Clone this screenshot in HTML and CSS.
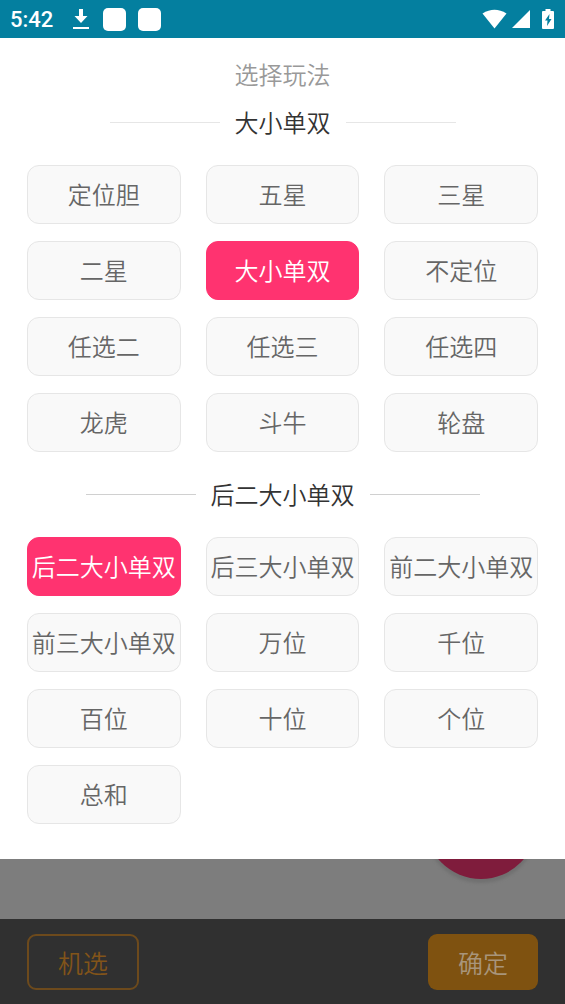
FILE: index.html
```html
<!DOCTYPE html>
<html lang="zh-CN">
<head>
<meta charset="utf-8">
<meta name="viewport" content="width=device-width, initial-scale=1">
<title>选择玩法</title>
<link rel="stylesheet" href="styles.css">
</head>
<body>
<div class="screen">
  <header class="status">
    <div class="status-group">
      <time class="clock">5:42</time>
      <svg class="download" width="16" height="22" viewBox="0 0 16 22" aria-hidden="true"><path d="M6 1h4v7h4.500L8 15 1.500 8H6zM0 19h16v2H0z"/></svg>
      <span class="app-dot"></span>
      <span class="app-dot"></span>
    </div>
    <div class="status-icons">
      <svg width="26" height="20" viewBox="0 0 26 20" aria-hidden="true"><path d="M.5 4.500Q12.500-3 24.500 4.500L12.500 19.500z"/></svg>
      <svg width="18" height="18" viewBox="0 0 18 18" aria-hidden="true"><path d="M18 0v18H0z"/></svg>
      <svg class="battery" width="12" height="20" viewBox="0 0 12 20" aria-hidden="true"><path fill-rule="evenodd" d="M3.500 0h5v2H11q1 0 1 1v16q0 1-1 1H1q-1 0-1-1V3q0-1 1-1h2.500zM7.500 5L3 11.500h2.500L5 17l4.500-7H7z"/></svg>
    </div>
  </header>

  <main class="sheet">
    <h1 class="title">选择玩法</h1>
    <section>
      <h2 class="heading">大小单双</h2>
      <div class="options">
        <button class="option" type="button">定位胆</button>
        <button class="option" type="button">五星</button>
        <button class="option" type="button">三星</button>
        <button class="option" type="button">二星</button>
        <button class="option selected" type="button" aria-pressed="true">大小单双</button>
        <button class="option" type="button">不定位</button>
        <button class="option" type="button">任选二</button>
        <button class="option" type="button">任选三</button>
        <button class="option" type="button">任选四</button>
        <button class="option" type="button">龙虎</button>
        <button class="option" type="button">斗牛</button>
        <button class="option" type="button">轮盘</button>
      </div>
    </section>
    <section>
      <h2 class="heading strong-rule">后二大小单双</h2>
      <div class="options">
        <button class="option selected" type="button" aria-pressed="true">后二大小单双</button>
        <button class="option" type="button">后三大小单双</button>
        <button class="option" type="button">前二大小单双</button>
        <button class="option" type="button">前三大小单双</button>
        <button class="option" type="button">万位</button>
        <button class="option" type="button">千位</button>
        <button class="option" type="button">百位</button>
        <button class="option" type="button">十位</button>
        <button class="option" type="button">个位</button>
        <button class="option" type="button">总和</button>
      </div>
    </section>
  </main>

  <div class="backdrop"><span class="fab"></span></div>

  <footer class="actions">
    <button class="action outline" type="button">机选</button>
    <button class="action solid" type="button">确定</button>
  </footer>
</div>
</body>
</html>
```

FILE: styles.css
```css
* {
  box-sizing: border-box;
}

body {
  margin: 0;
  font-family: "Noto Sans CJK SC", "Noto Sans", sans-serif;
  font-weight: 350;
}

button {
  font: inherit;
}

.screen {
  display: flex;
  flex-direction: column;
  min-height: 100vh;
  background: #7d7d7d;
}

.status {
  display: flex;
  align-items: center;
  justify-content: space-between;
  height: 38px;
  padding: 0 11px 0 10px;
  background: #047f9f;
  color: #fff;
}

.status svg {
  fill: #fff;
}

.status-group {
  display: flex;
  align-items: center;
}

.clock {
  padding-top: 2px;
  font: 500 22px/36px Roboto, sans-serif;
}

.download {
  margin: 0 6px 0 20px;
}

.app-dot {
  width: 23px;
  height: 23px;
  margin-left: 8px;
  border-radius: 5px;
  background: #fff;
}

.app-dot + .app-dot {
  margin-left: 12px;
}

.status-icons {
  display: flex;
  align-items: center;
  gap: 4px;
}

.battery {
  margin-left: 8px;
}

.sheet {
  padding: 18px 27px 35px;
  background: #fff;
}

.title,
.heading {
  margin: 0;
  font-size: 24px;
  font-weight: 350;
  line-height: 36px;
  text-align: center;
}

.title {
  color: #999;
}

.heading {
  display: flex;
  align-items: center;
  justify-content: center;
  gap: 15px;
  margin: 12px 0 25px;
  color: #333;
}

.heading::before,
.heading::after {
  content: "";
  width: 110px;
  height: 1px;
  background: #e6e6e6;
}

.strong-rule {
  margin-top: 24px;
}

.strong-rule::before,
.strong-rule::after {
  background: #d0d0d0;
}

.options {
  display: grid;
  grid-template-columns: repeat(3, 1fr);
  gap: 17px 25px;
}

.option {
  height: 59px;
  padding: 0 0 2px;
  border: 1px solid #e6e6e6;
  border-radius: 12px;
  background: #f9f9f9;
  color: #666;
  font-size: 24px;
  white-space: nowrap;
}

.selected {
  border-color: #ff3370;
  background: #ff3370;
  color: #fff;
}

.backdrop {
  position: relative;
  flex: 1;
  min-height: 60px;
  overflow: hidden;
}

.fab {
  position: absolute;
  right: 28px;
  top: -92px;
  width: 112px;
  height: 112px;
  border-radius: 50%;
  background: #7f1c3c;
  box-shadow: 0 3px 3px 1px #717171;
}

.actions {
  display: flex;
  align-items: center;
  justify-content: space-between;
  padding: 15px 27px 14px;
  background: #303030;
}

.action {
  height: 56px;
  padding: 0 30px;
  border: 0;
  border-radius: 9px;
  font-size: 25px;
}

.outline {
  padding: 0 29px;
  border: 2px solid #6d4a1c;
  background: transparent;
  color: #825419;
}

.solid {
  background: #7f5210;
  color: #a8957b;
}
```
